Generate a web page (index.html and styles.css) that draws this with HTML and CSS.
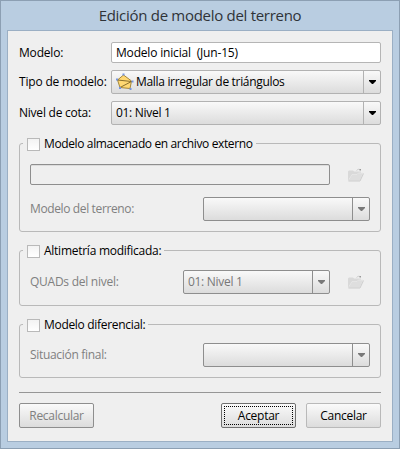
FILE: index.html
```html
<!DOCTYPE html>
<html lang="es">
<head>
<meta charset="utf-8">
<title>Edición de modelo del terreno</title>
<link rel="stylesheet" href="styles.css">
</head>
<body>
<svg width="0" height="0" class="defs">
  <defs>
    <symbol id="folder" viewBox="0 0 16 14">
      <path d="M0 12.500V3.500L1 2.500H5L6 3.500H13V8L11 12.500z" fill="#d9d9d9"/>
      <path d="M8.500 2.500Q10 .5 12 1.500" fill="none" stroke="#cfcfcf"/>
      <path d="M11.500 1h1.500v1.500h-1.500z" fill="#999"/>
      <path d="M1 12 4 7H9L10.500 5H15L12 12z" fill="#dedede"/>
      <path d="M1 11.500 4 6.500H9L10.500 5H15" fill="none" stroke="#e8e8e8" stroke-width=".8"/>
      <path d="M.5 13H12L15.500 5.500" fill="none" stroke="#c9c9c9" stroke-width=".9"/>
    </symbol>
    <symbol id="arrow" viewBox="0 0 7 4"><path d="M0 0H7V1L4 4H3L0 1z" fill="currentColor"/></symbol>
  </defs>
</svg>
<div class="window">
  <h1 class="title">Edición de modelo del terreno</h1>
  <main class="content">
    <div class="row"><span class="label t-modelo">Modelo:</span><div class="field"><span class="t-inicial">Modelo inicial&nbsp; (Jun-15)</span></div></div>
    <div class="row"><span class="label t-tipo">Tipo de modelo:</span>
      <div class="select with-icon">
        <svg class="mesh" width="18" height="18" viewBox="0 0 18 18">
          <path d="M7.500 2 15.500 8 14 15.500 4 14.500 1.500 7z" fill="#ffd873" stroke="#a5873a"/>
          <path d="M1.500 7 15.500 8.500 4 14.500" fill="none" stroke="#7a6122" stroke-width=".9"/>
          <path d="M6.500 .5h2v2h-2zM0 5.500h2v2H0zM15.500 7.500h2v2h-2zM3 14h2v2H3zM13.500 15h2v2h-2z" fill="#7594dd"/>
        </svg>
        <span class="value t-malla">Malla irregular de triángulos</span><span class="drop"><svg width="7" height="4"><use href="#arrow"/></svg></span>
      </div>
    </div>
    <div class="row"><span class="label t-cota">Nivel de cota:</span><div class="select"><span class="value t-nivel">01: Nivel 1</span><span class="drop"><svg width="7" height="4"><use href="#arrow"/></svg></span></div></div>

    <section class="group external">
      <div class="legend"><i class="check"></i><span class="t-ext">Modelo almacenado en archivo externo</span></div>
      <div class="line"><div class="field disabled path"></div><svg class="folder" width="16" height="14"><use href="#folder"/></svg></div>
      <div class="line second"><span class="label t-terreno">Modelo del terreno:</span><div class="select disabled wide"><span class="value"></span><span class="drop"><svg width="7" height="4"><use href="#arrow"/></svg></span></div></div>
    </section>
    <section class="group altimetry">
      <div class="legend"><i class="check"></i><span class="t-alt">Altimetría modificada:</span></div>
      <div class="line"><span class="label t-quads">QUADs del nivel:</span><div class="select disabled level"><span class="value t-nivel">01: Nivel 1</span><span class="drop"><svg width="7" height="4"><use href="#arrow"/></svg></span></div><svg class="folder" width="16" height="14"><use href="#folder"/></svg></div>
    </section>
    <section class="group differential">
      <div class="legend"><i class="check"></i><span class="t-dif">Modelo diferencial:</span></div>
      <div class="line"><span class="label t-sit">Situación final:</span><div class="select disabled wide"><span class="value"></span><span class="drop"><svg width="7" height="4"><use href="#arrow"/></svg></span></div></div>
    </section>

    <hr class="rule">
    <div class="buttons">
      <button class="button off" disabled>Recalcular</button>
      <button class="button default"><span class="focus">Aceptar</span></button>
      <button class="button">Cancelar</button>
    </div>
  </main>
</div>
</body>
</html>
```
FILE: styles.css
```css
* { box-sizing: border-box; }
body { margin: 0; font: 12px/16px "Open Sans", "Noto Sans", sans-serif; letter-spacing: -0.18px; color: #000; white-space: nowrap; }
.defs { position: absolute; }
.window { width: 400px; height: 449px; border: 1px solid #8c9fb3; background: #b9cde1; display: flex; flex-direction: column; padding: 0 6px 6px; }
.title { margin: 0; height: 29px; font-size: 15px; line-height: 29px; font-weight: 400; letter-spacing: -0.29px; color: #2f3338; text-align: center; }
.content { flex: 1; border: 1px solid #9bafc4; background: #efefef; padding: 11px 11px 0; }
.row { display: flex; align-items: center; height: 24px; margin-bottom: 7px; }
.row:first-child { height: 21px; }
.row .label { width: 92px; flex: none; }
.field { flex: 1; height: 21px; border: 1px solid #b5b5b5; border-radius: 2px; background: #fff; padding: 2px 4px; }
.field.disabled { background: #efefef; border-color: #8e8e8e; box-shadow: inset 0 1px #dcdcdc; }
.select { flex: 1; height: 24px; display: flex; align-items: center; border: 1px solid #b2b2b2; border-radius: 2px; background: linear-gradient(#f9f9f9, #dcdcdc); padding-left: 4px; }
.mesh { flex: none; margin-right: 2px; }
.value { flex: 1; }
.t-malla { letter-spacing: -0.32px; }
.t-cota { letter-spacing: -0.23px; }
.t-nivel { letter-spacing: -0.3px; }
.t-ext, .t-terreno { letter-spacing: -0.37px; }
.t-alt, .t-quads { letter-spacing: -0.26px; }
.t-dif, .t-sit { letter-spacing: -0.31px; }
.drop { width: 17px; height: 22px; border-left: 1px solid #b2b2b2; display: flex; align-items: center; justify-content: center; }
.select.disabled { flex: none; border-color: #8e8e8e; color: #787878; margin-left: auto; }
.disabled .drop { border-color: #8e8e8e; }
.group { border: 1px solid #b9b9b9; border-radius: 3px; padding: 0 10px; }
.legend { display: flex; align-items: center; width: max-content; height: 14px; margin: -7px 0 0 -7px; padding: 0 3px 0 4px; background: #efefef; }
.check { width: 13px; height: 13px; border: 1px solid #b9b9b9; background: linear-gradient(#f3f3f3, #fff); margin-right: 4px; }
.external { height: 89px; margin-top: 18px; }
.altimetry { height: 56px; margin-top: 18px; }
.differential { height: 54px; margin-top: 18px; }
.line { display: flex; align-items: center; height: 24px; margin-top: 12px; color: #808080; }
.external .line { height: 21px; margin-top: 13px; }
.external .second { height: 24px; margin-top: 12px; }
.differential .line { margin-top: 11px; }
.path { flex: none; width: 300px; }
.folder { flex: none; margin-left: 18px; }
.wide { width: 167px; }
.level { width: 147px; }
.level + .folder { margin-right: 6px; }
.rule { height: 1px; border: 0; background: #969696; margin: 14px 0 10px; }
.buttons { display: flex; gap: 10px; }
.button { width: 75px; height: 25px; padding: 2px; border: 1px solid #b9b9b9; border-radius: 2px; background: linear-gradient(#fafafa, #dcdcdc); font: inherit; letter-spacing: -0.28px; color: #000; }
.off { margin-right: auto; border-color: #8e8e8e; color: #808080; }
.default { border-color: #6f6f6f; }
.focus { display: block; height: 19px; line-height: 17px; border: 1px dotted #000; }
```
